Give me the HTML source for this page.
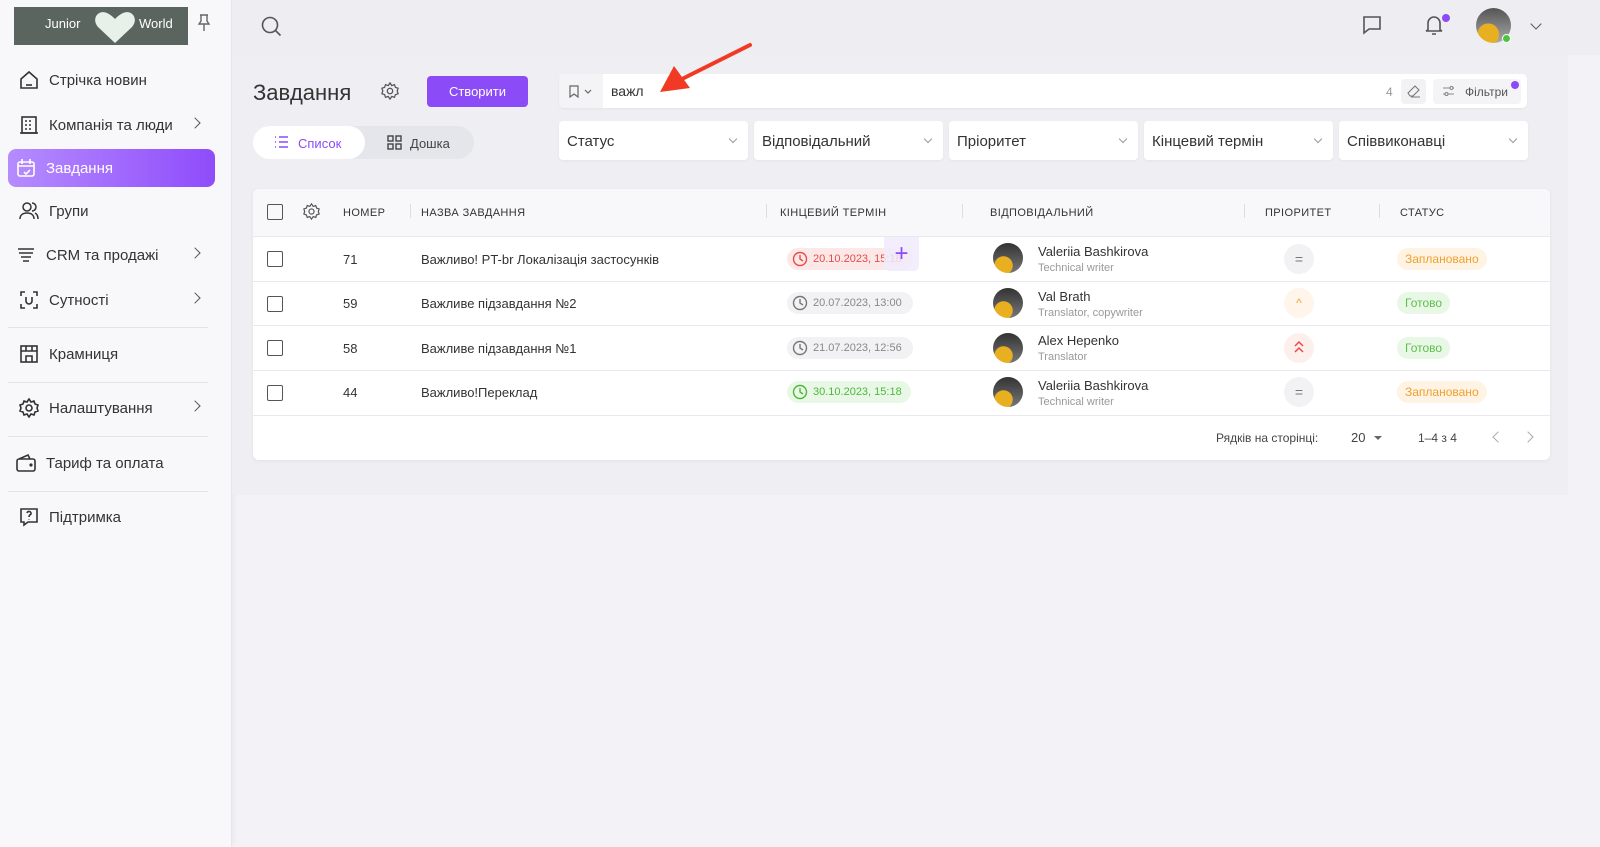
<!DOCTYPE html>
<html><head><meta charset="utf-8"><style>
*{box-sizing:border-box;margin:0;padding:0}
body{width:1600px;height:847px;overflow:hidden;font-family:"Liberation Sans",sans-serif;background:#f3f3f7;position:relative;color:#333}
.a{position:absolute}
.side{left:0;top:0;width:232px;height:847px;background:#f8f8fb;border-right:1px solid #e6e6ec;box-shadow:2px 0 6px rgba(0,0,0,.04)}
.logo{left:14px;top:7px;width:174px;height:38px;background:#5a6560;color:#fff;font-size:13px}
.nav{left:8px;width:207px;height:38px;display:flex;align-items:center;font-size:15px;color:#333}
.nav svg{margin:0 10px 0 11px}
.chev{position:absolute;right:16px;top:13px;width:8px;height:8px;border-right:1.6px solid #555;border-top:1.6px solid #555;transform:rotate(45deg)}
.hr{left:8px;width:200px;height:1px;background:#e3e3e8}
.top{left:232px;top:0;width:1368px;height:55px;background:#ededf2}
.main{left:232px;top:55px;width:1336px;height:440px;background:#efeff3}
.sel{top:121px;width:189px;height:39px;background:#fff;border-radius:4px;font-size:15px;color:#333;padding:12px 8px;box-shadow:0 1px 2px rgba(0,0,0,.05)}
.sel:after{content:"";position:absolute;right:12px;top:15px;width:5px;height:5px;border-right:1px solid #999;border-bottom:1px solid #999;transform:rotate(45deg)}
.card{left:253px;top:189px;width:1297px;height:271px;background:#fff;border-radius:6px;box-shadow:0 1px 4px rgba(0,0,0,.06)}
.th{font-size:11px;color:#333;letter-spacing:.4px;top:207px}
.row{left:253px;width:1297px;height:45px;border-top:1px solid #e8e8ee}
.cb{left:267px;width:16px;height:16px;border:1.6px solid #555;border-radius:2px}
.t{font-size:13px;color:#333}
.date{height:22px;border-radius:11px;font-size:11px;padding:5px 8px 0 26px}
.date svg{position:absolute;left:5px;top:3px}
.nm{font-size:13px;color:#333}
.rl{font-size:11px;color:#999}
.av{left:993px;width:30px;height:30px;border-radius:50%;background:radial-gradient(circle at 35% 75%,#e8b020 0 30%,transparent 32%),linear-gradient(#333,#777)}
.pr{left:1284px;width:30px;height:30px;border-radius:50%;text-align:center;line-height:30px;font-size:14px}
.st{height:22px;border-radius:11px;font-size:12px;padding:4px 8px}
</style></head><body>
<div class="a side"></div>
<div class="a logo"><span class="a" style="left:31px;top:9px">Junior</span><svg class="a" style="left:78px;top:2px" width="46" height="36" viewBox="0 0 46 36"><path d="M23 34 L6 18 C-1 10 6 0 15 4 C19 6 21 8 23 10 C25 8 27 6 31 4 C40 0 47 10 40 18Z" fill="#e8f0ea"/></svg><span class="a" style="left:125px;top:9px">World</span></div>
<svg class="a" style="left:197px;top:14px" width="14" height="18" viewBox="0 0 14 18" fill="none" stroke="#666" stroke-width="1.4"><path d="M3 1h8M4 1v6L2 10h10L10 7V1M7 10v7"/></svg>

<div class="a nav" style="top:61px"><svg width="20" height="20" viewBox="0 0 20 20" fill="none" stroke="#333" stroke-width="1.6"><path d="M2 9L10 2l8 7v9H2z"/><path d="M7 15h6"/></svg>Стрічка новин</div>
<div class="a nav" style="top:106px"><svg width="20" height="20" viewBox="0 0 20 20" fill="none" stroke="#333" stroke-width="1.6"><rect x="3" y="2" width="14" height="16"/><path d="M6 6h2M10 6h2M6 10h2M10 10h2M6 14h2M10 14h2M1 18h18"/></svg>Компанія та люди<span class="chev"></span></div>
<div class="a nav" style="top:149px;background:linear-gradient(90deg,#b58cff,#8f4cfb);border-radius:8px;color:#fff"><svg width="20" height="20" viewBox="0 0 20 20" fill="none" stroke="#fff" stroke-width="1.6" style="margin-left:8px"><rect x="2" y="4" width="16" height="14" rx="2"/><path d="M6 1v5M14 1v5M2 8h16M8 14l2 2 4-4"/></svg>Завдання</div>
<div class="a nav" style="top:192px"><svg width="20" height="20" viewBox="0 0 20 20" fill="none" stroke="#333" stroke-width="1.5"><circle cx="8" cy="6" r="4"/><path d="M1 18c0-4 3-6 7-6s7 2 7 6M13 2a4 4 0 010 8M16 12c2 1 3 3 3 6"/></svg>Групи</div>
<div class="a nav" style="top:236px"><svg width="20" height="20" viewBox="0 0 20 20" fill="none" stroke="#333" stroke-width="1.6" style="margin-left:8px"><path d="M2 4h16M3 8h14M5 12h10M7 16h6"/></svg>CRM та продажі<span class="chev"></span></div>
<div class="a nav" style="top:281px"><svg width="20" height="20" viewBox="0 0 20 20" fill="none" stroke="#333" stroke-width="1.6"><path d="M2 6V2h4M14 2h4v4M18 14v4h-4M6 18H2v-4M7 7v4a3 3 0 006 0V7"/></svg>Сутності<span class="chev"></span></div>
<div class="a hr" style="top:327px"></div>
<div class="a nav" style="top:335px"><svg width="20" height="20" viewBox="0 0 20 20" fill="none" stroke="#333" stroke-width="1.6"><rect x="2" y="2" width="16" height="16"/><path d="M2 7h16M7 18v-6h6v6M7 2v5M13 2v5"/></svg>Крамниця</div>
<div class="a hr" style="top:382px"></div>
<div class="a nav" style="top:389px"><svg width="20" height="20" viewBox="0 0 20 20" fill="none" stroke="#333" stroke-width="1.6"><circle cx="10" cy="10" r="3"/><path d="M10 1l2 3 3-1 1 3 3 1-1 3 1 3-3 1-1 3-3-1-2 3-2-3-3 1-1-3-3-1 1-3-1-3 3-1 1-3 3 1z"/></svg>Налаштування<span class="chev"></span></div>
<div class="a hr" style="top:436px"></div>
<div class="a nav" style="top:444px"><svg width="20" height="20" viewBox="0 0 20 20" fill="none" stroke="#333" stroke-width="1.6" style="margin-left:8px"><rect x="1" y="6" width="18" height="12" rx="2"/><path d="M3 6l9-4 2 4"/><circle cx="15" cy="12" r=".8"/></svg>Тариф та оплата</div>
<div class="a hr" style="top:491px"></div>
<div class="a nav" style="top:498px"><svg width="20" height="20" viewBox="0 0 20 20" fill="none" stroke="#333" stroke-width="1.6"><path d="M2 2h16v13H9l-4 3v-3H2z"/><path d="M8 6a2 2 0 114 1c-1 1-2 1-2 3M10 12v.5"/></svg>Підтримка</div>

<div class="a top"></div>
<svg class="a" style="left:260px;top:15px" width="22" height="22" viewBox="0 0 22 22" fill="none" stroke="#555" stroke-width="1.6"><circle cx="10" cy="10" r="7.5"/><path d="M15.5 15.5l5 5"/></svg>
<svg class="a" style="left:1361px;top:14px" width="22" height="22" viewBox="0 0 22 22" fill="none" stroke="#555" stroke-width="1.6"><path d="M3 3h16v12H8l-5 4z"/></svg>
<svg class="a" style="left:1423px;top:14px" width="22" height="22" viewBox="0 0 22 22" fill="none" stroke="#555" stroke-width="1.6"><path d="M5 16V9a6 6 0 0112 0v7l2 1H3zM9 20h4"/></svg>
<div class="a" style="left:1442px;top:14px;width:8px;height:8px;border-radius:50%;background:#8b4cf7"></div>
<div class="a" style="left:1476px;top:8px;width:35px;height:35px;border-radius:50%;background:radial-gradient(circle at 35% 75%,#e8b020 0 30%,transparent 32%),linear-gradient(#555,#aaa)"></div>
<div class="a" style="left:1502px;top:34px;width:9px;height:9px;border-radius:50%;background:#4cc43c;border:1.5px solid #fff"></div>
<div class="a" style="left:1532px;top:20px;width:8px;height:8px;border-right:1.6px solid #555;border-bottom:1.6px solid #555;transform:rotate(45deg)"></div>

<div class="a main"></div>
<div class="a" style="left:253px;top:80px;font-size:22px;color:#333">Завдання</div>
<svg class="a" style="left:381px;top:82px" width="18" height="18" viewBox="0 0 20 20" fill="none" stroke="#555" stroke-width="1.4"><circle cx="10" cy="10" r="3"/><path d="M10 1l2 3 3-1 1 3 3 1-1 3 1 3-3 1-1 3-3-1-2 3-2-3-3 1-1-3-3-1 1-3-1-3 3-1 1-3 3 1z"/></svg>
<div class="a" style="left:427px;top:76px;width:101px;height:31px;background:#8b4cf7;border-radius:4px;color:#fff;font-size:13px;text-align:center;line-height:31px">Створити</div>
<div class="a" style="left:253px;top:126px;width:221px;height:33px;background:#e5e5ec;border-radius:17px"></div>
<div class="a" style="left:253px;top:126px;width:112px;height:33px;background:#fff;border-radius:17px;color:#8b4cf7;font-size:13px;padding:10px 0 0 45px">Список</div>
<svg class="a" style="left:274px;top:135px" width="15" height="14" viewBox="0 0 15 14" fill="none" stroke="#8b4cf7" stroke-width="1.5"><path d="M1 2h1M5 2h9M1 7h1M5 7h9M1 12h1M5 12h9"/></svg>
<svg class="a" style="left:387px;top:135px" width="15" height="15" viewBox="0 0 15 15" fill="none" stroke="#444" stroke-width="1.4"><rect x="1" y="1" width="5" height="5"/><rect x="9" y="1" width="5" height="5"/><rect x="1" y="9" width="5" height="5"/><rect x="9" y="9" width="5" height="5"/></svg>
<div class="a" style="left:410px;top:136px;font-size:13px;color:#444">Дошка</div>

<div class="a" style="left:559px;top:74px;width:968px;height:34px;background:#fff;border-radius:5px;box-shadow:0 1px 2px rgba(0,0,0,.05)"></div>
<div class="a" style="left:559px;top:74px;width:44px;height:34px;background:#f4f4f7;border-radius:5px 0 0 5px"></div>
<svg class="a" style="left:569px;top:85px" width="24" height="13" viewBox="0 0 24 13" fill="none" stroke="#666" stroke-width="1.2"><path d="M1 1h8v11l-4-3-4 3z M16 5l3 3 3-3"/></svg>
<div class="a" style="left:611px;top:83px;font-size:14px;color:#333">важл</div>
<div class="a" style="left:1386px;top:85px;font-size:12px;color:#999">4</div>
<div class="a" style="left:1401px;top:79px;width:25px;height:25px;background:#f2f2f5;border-radius:4px"></div>
<svg class="a" style="left:1407px;top:85px" width="14" height="13" viewBox="0 0 14 13" fill="none" stroke="#777" stroke-width="1.1"><path d="M1 8l7-7 4 4-6 6H3zM4 12h9"/></svg>
<div class="a" style="left:1433px;top:79px;width:88px;height:25px;background:#f4f4f7;border-radius:4px;font-size:12px;color:#555;padding:6px 0 0 32px">Фільтри</div>
<svg class="a" style="left:1442px;top:86px" width="13" height="10" viewBox="0 0 13 10" fill="none" stroke="#888" stroke-width="1.1"><path d="M1 2h7M11 2h1M1 8h2M6 8h6"/><circle cx="9.5" cy="2" r="1.5"/><circle cx="4.5" cy="8" r="1.5"/></svg>
<div class="a" style="left:1511px;top:81px;width:8px;height:8px;border-radius:50%;background:#8b4cf7"></div>

<div class="a sel" style="left:559px">Статус</div>
<div class="a sel" style="left:754px">Відповідальний</div>
<div class="a sel" style="left:949px">Пріоритет</div>
<div class="a sel" style="left:1144px">Кінцевий термін</div>
<div class="a sel" style="left:1339px">Співвиконавці</div>

<div class="a card"></div>
<div class="a" style="left:253px;top:189px;width:1297px;height:47px;background:#f8f8fb;border-radius:6px 6px 0 0"></div>
<div class="a cb" style="top:204px"></div>
<svg class="a" style="left:303px;top:203px" width="17" height="17" viewBox="0 0 20 20" fill="none" stroke="#555" stroke-width="1.4"><circle cx="10" cy="10" r="3"/><path d="M10 1l2 3 3-1 1 3 3 1-1 3 1 3-3 1-1 3-3-1-2 3-2-3-3 1-1-3-3-1 1-3-1-3 3-1 1-3 3 1z"/></svg>
<div class="a th" style="left:343px">НОМЕР</div>
<div class="a" style="left:410px;top:204px;width:1px;height:14px;background:#ddd"></div>
<div class="a th" style="left:421px">НАЗВА ЗАВДАННЯ</div>
<div class="a" style="left:766px;top:204px;width:1px;height:14px;background:#ddd"></div>
<div class="a th" style="left:780px">КІНЦЕВИЙ ТЕРМІН</div>
<div class="a" style="left:962px;top:204px;width:1px;height:14px;background:#ddd"></div>
<div class="a th" style="left:990px">ВІДПОВІДАЛЬНИЙ</div>
<div class="a" style="left:1244px;top:204px;width:1px;height:14px;background:#ddd"></div>
<div class="a th" style="left:1265px">ПРІОРИТЕТ</div>
<div class="a" style="left:1379px;top:204px;width:1px;height:14px;background:#ddd"></div>
<div class="a th" style="left:1400px">СТАТУС</div>

<div class="a row" style="top:236px"></div>
<div class="a row" style="top:281px"></div>
<div class="a row" style="top:325px"></div>
<div class="a row" style="top:370px"></div>
<div class="a row" style="top:415px"></div>

<!-- row1 -->
<div class="a cb" style="top:251px"></div>
<div class="a t" style="left:343px;top:252px">71</div>
<div class="a t" style="left:421px;top:252px">Важливо! PT-br Локалізація застосунків</div>
<div class="a date" style="left:787px;top:248px;width:126px;background:#fde8e8;color:#e84a4a"><svg width="16" height="16" viewBox="0 0 16 16" fill="none" stroke="#e84a4a" stroke-width="1.4"><circle cx="8" cy="8" r="6.5"/><path d="M8 4v4l3 2"/></svg>20.10.2023, 15:18</div>
<div class="a" style="left:884px;top:237px;width:35px;height:34px;background:rgba(240,235,252,.85);border-radius:0 0 6px 6px;color:#8b4cf7;font-size:24px;text-align:center;line-height:34px">+</div>
<div class="a av" style="top:243px"></div>
<div class="a nm" style="left:1038px;top:244px">Valeriia Bashkirova</div>
<div class="a rl" style="left:1038px;top:262px">Technical writer</div>
<div class="a pr" style="top:244px;background:#f2f2f4;color:#777">=</div>
<div class="a st" style="left:1397px;top:248px;background:#fff3e3;color:#f0a030">Заплановано</div>
<!-- row2 -->
<div class="a cb" style="top:296px"></div>
<div class="a t" style="left:343px;top:296px">59</div>
<div class="a t" style="left:421px;top:296px">Важливе підзавдання №2</div>
<div class="a date" style="left:787px;top:292px;width:126px;background:#f2f2f4;color:#888"><svg width="16" height="16" viewBox="0 0 16 16" fill="none" stroke="#777" stroke-width="1.4"><circle cx="8" cy="8" r="6.5"/><path d="M8 4v4l3 2"/></svg>20.07.2023, 13:00</div>
<div class="a av" style="top:288px"></div>
<div class="a nm" style="left:1038px;top:289px">Val Brath</div>
<div class="a rl" style="left:1038px;top:307px">Translator, copywriter</div>
<div class="a pr" style="top:288px;background:#fff5ea;color:#f0a030;font-size:12px">^</div>
<div class="a st" style="left:1397px;top:292px;background:#e9f8e6;color:#5cbf4a">Готово</div>
<!-- row3 -->
<div class="a cb" style="top:340px"></div>
<div class="a t" style="left:343px;top:341px">58</div>
<div class="a t" style="left:421px;top:341px">Важливе підзавдання №1</div>
<div class="a date" style="left:787px;top:337px;width:126px;background:#f2f2f4;color:#888"><svg width="16" height="16" viewBox="0 0 16 16" fill="none" stroke="#777" stroke-width="1.4"><circle cx="8" cy="8" r="6.5"/><path d="M8 4v4l3 2"/></svg>21.07.2023, 12:56</div>
<div class="a av" style="top:333px"></div>
<div class="a nm" style="left:1038px;top:333px">Alex Hepenko</div>
<div class="a rl" style="left:1038px;top:351px">Translator</div>
<div class="a pr" style="top:333px;background:#fdf0ec"><svg style="margin-top:8px" width="10" height="12" viewBox="0 0 10 12" fill="none" stroke="#e84a4a" stroke-width="1.5"><path d="M1 5l4-4 4 4M1 11l4-4 4 4"/></svg></div>
<div class="a st" style="left:1397px;top:337px;background:#e9f8e6;color:#5cbf4a">Готово</div>
<!-- row4 -->
<div class="a cb" style="top:385px"></div>
<div class="a t" style="left:343px;top:385px">44</div>
<div class="a t" style="left:421px;top:385px">Важливо!Переклад</div>
<div class="a date" style="left:787px;top:381px;width:124px;background:#e9f8e6;color:#4cb83a"><svg width="16" height="16" viewBox="0 0 16 16" fill="none" stroke="#4cb83a" stroke-width="1.4"><circle cx="8" cy="8" r="6.5"/><path d="M8 4v4l3 2"/></svg>30.10.2023, 15:18</div>
<div class="a av" style="top:377px"></div>
<div class="a nm" style="left:1038px;top:378px">Valeriia Bashkirova</div>
<div class="a rl" style="left:1038px;top:396px">Technical writer</div>
<div class="a pr" style="top:377px;background:#f2f2f4;color:#777">=</div>
<div class="a st" style="left:1397px;top:381px;background:#fff3e3;color:#f0a030">Заплановано</div>

<div class="a" style="left:1216px;top:431px;font-size:12px;color:#444">Рядків на сторінці:</div>
<div class="a" style="left:1351px;top:430px;font-size:13px;color:#444">20</div>
<div class="a" style="left:1374px;top:436px;border:4px solid transparent;border-top:4px solid #666"></div>
<div class="a" style="left:1418px;top:431px;font-size:12px;color:#444">1–4 з 4</div>
<div class="a" style="left:1494px;top:433px;width:8px;height:8px;border-left:1.4px solid #aaa;border-bottom:1.4px solid #aaa;transform:rotate(45deg)"></div>
<div class="a" style="left:1524px;top:433px;width:8px;height:8px;border-right:1.4px solid #aaa;border-top:1.4px solid #aaa;transform:rotate(45deg)"></div>

<svg class="a" style="left:650px;top:40px" width="105" height="60" viewBox="0 0 105 60"><path d="M100 5 L30 40" stroke="#f03a24" stroke-width="4" stroke-linecap="round"/><path d="M10 52 L24 26 L40 48 Z" fill="#f03a24"/></svg>
</body></html>
